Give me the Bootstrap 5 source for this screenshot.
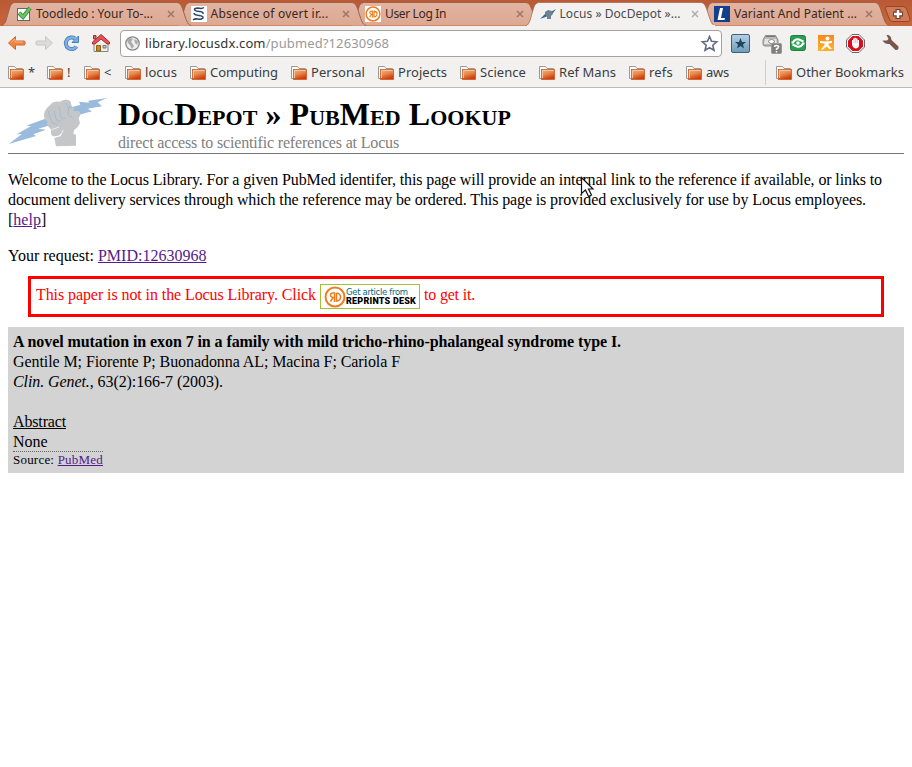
<!DOCTYPE html>
<html lang="en">
<head>
<meta charset="utf-8">
<title>Locus » DocDepot » PubMed Lookup</title>
<link href="https://cdn.jsdelivr.net/npm/bootstrap@5.3.0/dist/css/bootstrap.min.css" rel="stylesheet">
<style>
body{width:912px;height:767px;overflow:hidden;background:#fff;color:#000;font-family:"Liberation Serif",serif;font-size:16px;line-height:20px}
svg{display:block;flex:none;overflow:visible}
.chrome{font-family:"Noto Sans","Open Sans",sans-serif;color:#3c3c3c;height:88px;background:#f2f1f0;border-bottom:1px solid #bdbab7}
.strip{height:26px;background:linear-gradient(#b95a35,#c9653c);padding-left:2px;overflow:hidden}
.tab{width:190px;height:26px;margin-right:-15.5px;padding:1px 11px 0 14px;color:#3b2620;font-size:12px;line-height:25px}
.tab .shape{position:absolute;left:0;top:0;z-index:-1}
.tab.on{color:#4a4a4a}
.t1{z-index:5}.t2{z-index:4}.t3{z-index:3}.t4{z-index:9}.t5{z-index:2}
.tab .title{margin-left:4px}
.tab .x{position:absolute;left:165px;top:10px}
.fit{display:inline-block;white-space:nowrap;overflow:visible}
.tools{height:34px;padding:4px 0 4px 7px}
.url{width:602px;height:27px;border:1px solid #a5a29e;border-radius:4px;background:#fff;font-size:13px;margin-left:9px;padding:0 3px 0 4px}
.url .fit{color:#333;margin-left:5px}.url .path{color:#999}
.marks{height:25px;font-size:13px;line-height:24px;padding-left:8px;column-gap:13px}
.marks .fit{margin-bottom:2px}
.other{padding-left:10px;height:25px;border-left:1px solid #d0cdca}
.folder{width:16px;margin-right:4px}
.page{padding:8px 8px 0}
.head{height:58px;border-bottom:1px solid #777}
.head h1{font-size:32px;line-height:37px;font-weight:bold;font-variant:small-caps;margin:0}
.sub{color:#808080}
.intro{margin:16px 0 16px}
.intro .fit,.record .fit{vertical-align:top}
.page a{color:#551a8b}
.notice{margin:10px 20px;height:41px;border:3px solid red;color:red;padding:0 5px}
.rd{width:100px;height:25px;border:1px solid #a5bf32;background:#fff;margin:0 4px;padding-left:3px}
.rd .l1{font:8.5px/9px "DejaVu Sans",sans-serif;color:#006a83}
.rd .l2{font:900 9px/9px Roboto,sans-serif;color:#000}
.record{height:146px;background:#d3d3d3;padding:5px}
.source{font-size:13px;line-height:16px;border-top:1px dotted #666;margin-top:-1px;width:90px}
.pointer{position:absolute;left:580px;top:176px}
</style>
<script src="https://cdn.jsdelivr.net/npm/bootstrap@5.3.0/dist/js/bootstrap.bundle.min.js"></script>
</head>
<body>
<svg width="0" height="0" class="position-absolute">
<defs>
<linearGradient id="gf" x1="0" y1="0" x2="0.4" y2="1"><stop offset="0" stop-color="#f0b584"/><stop offset=".5" stop-color="#e78b4c"/><stop offset="1" stop-color="#cf3d10"/></linearGradient>
<linearGradient id="gt" x1="0" y1="0" x2="0" y2="1"><stop offset="0" stop-color="#e3b4a1"/><stop offset="1" stop-color="#dba892"/></linearGradient>
<linearGradient id="gb" x1="0" y1="0" x2="0" y2="1"><stop offset="0" stop-color="#b5d1e3"/><stop offset="1" stop-color="#6e9cba"/></linearGradient>
<linearGradient id="go" x1="0" y1="0" x2="0" y2="1"><stop offset="0" stop-color="#f58a1f"/><stop offset="1" stop-color="#fbb42c"/></linearGradient>
<symbol id="folder" viewBox="0 0 16 16"><path d="M.5 13.500V1.500H6.500L8 3.500H14.500V6" fill="#fff" stroke="#999"/><path d="M.5 13.500H3" stroke="#999"/><rect x="2.500" y="4.500" width="13" height="10" fill="url(#gf)" stroke="#cc5a22" stroke-width=".8"/><path d="M3.500 13V5.500H14.500" fill="none" stroke="#f4c59c"/></symbol>
<symbol id="tab" viewBox="0 0 190 26"><path d="M0 25.500C4 24 4.500 18 7 10C8.500 5 9.500 2.500 14 2.500H174C178.500 2.500 179.500 6 181 10C184 19 185 24.500 189 25.500" fill="url(#gt)" stroke="#9a614b"/></symbol>
<symbol id="x" viewBox="0 0 8 8"><path d="M1 1L7 7M7 1L1 7" stroke="currentColor" stroke-width="1.500" opacity=".4"/></symbol>
<symbol id="rd" viewBox="0 0 22 22"><circle cx="11" cy="11" r="9.500" fill="#fff" stroke="#ee7d20" stroke-width="2"/><path d="M10.500 16V7H9Q6.500 7 6.500 9T9 11.500H10.500M9 11.500L6.500 15.500M12.500 7V15H13Q16.500 14.500 16.500 11T12.500 7" fill="none" stroke="#ee7d20" stroke-width="1.500"/></symbol>
</defs>
</svg>
<header class="chrome">
<div class="strip d-flex">
<div class="tab t1 position-relative d-flex align-items-center flex-shrink-0"><svg class="shape" width="190" height="26"><use href="#tab"/></svg>
<svg width="16" height="16"><rect x="1.500" y="2.500" width="12" height="12" fill="#fff" stroke="#666"/><path d="M3 7L7 11L14 2" fill="none" stroke="#338038" stroke-width="4"/><path d="M3 7L7 11L14 2" fill="none" stroke="#66c75e" stroke-width="2.500"/></svg>
<span class="title fit" data-w="117">Toodledo : Your To-...</span><svg class="x" width="8" height="8"><use href="#x"/></svg></div>
<div class="tab t2 position-relative d-flex align-items-center flex-shrink-0"><svg class="shape" width="190" height="26"><use href="#tab"/></svg>
<svg width="16" height="16"><path fill="#fff" d="M0 0H16V16H0Z"/><path d="M13 1.500Q11 3 7 2Q3 2 3.500 4Q5 5.500 9 5.500Q12.500 6 12 8M3 7Q3 9 8 9.500Q12.500 10 12 12Q10 14 6.500 13Q4 12.500 2 14" fill="none" stroke="#29466d" stroke-width="1.500"/></svg>
<span class="title fit" data-w="118">Absence of overt ir...</span><svg class="x" width="8" height="8"><use href="#x"/></svg></div>
<div class="tab t3 position-relative d-flex align-items-center flex-shrink-0"><svg class="shape" width="190" height="26"><use href="#tab"/></svg>
<svg width="16" height="16"><path fill="#fff" d="M0 0H16V16H0Z"/><use href="#rd"/></svg>
<span class="title fit" data-w="61">User Log In</span><svg class="x" width="8" height="8"><use href="#x"/></svg></div>
<div class="tab t4 on position-relative d-flex align-items-center flex-shrink-0"><svg class="shape" width="190" height="26"><path d="M0 26C4 24 4.500 18 7 10C8.500 5 9.500 2.500 14 2.500H174C178.500 2.500 179.500 6 181 10C184 19 185 24.500 189 26Z" fill="#f2f1f0" stroke="#a66a50" stroke-width=".8"/><path d="M1 26H189" stroke="#f2f1f0" stroke-width="2"/></svg>
<svg width="16" height="16"><path d="M0 13L5 8L9 7L16 3L13 7L8 10Z" fill="#1c68a9"/><path d="M5 6L8 4L12 5L13 8L11 10V13H7V10L5 9Z" fill="#75818a"/></svg>
<span class="title fit" data-w="121">Locus » DocDepot »...</span><svg class="x" width="8" height="8"><use href="#x"/></svg></div>
<div class="tab t5 position-relative d-flex align-items-center flex-shrink-0"><svg class="shape" width="190" height="26"><use href="#tab"/></svg>
<svg width="16" height="16"><path fill="#153f8c" d="M0 0H16V16H0Z"/><path d="M6 2H9L7 12H11L10.500 14H3.500Z" fill="#fff"/></svg>
<span class="title fit" data-w="123">Variant And Patient ...</span><svg class="x" width="8" height="8"><use href="#x"/></svg></div>
<svg class="ms-2" width="30" height="26"><path d="M4 6.500H20Q23 6.500 24 10L27 19Q27.500 21.500 25 21.500H10Q7 21.500 6 18L2.500 9Q2 6.500 4 6.500Z" fill="#d07b58" stroke="#994622"/><path d="M15 9V19M10 14H20" stroke="#773c30" stroke-width="5"/><path d="M15 10V18M11 14H19" stroke="#fff" stroke-width="2.500"/></svg>
</div>
<div class="tools d-flex align-items-center">
<svg width="20" height="18"><path d="M1.500 9L8.500 2.500V7H17.500Q19 9 17.500 11H8.500V15.500Z" fill="#ee8440" stroke="#d66828"/><path d="M4 8.500L8 5V8H16" fill="none" stroke="#f6b184"/></svg>
<svg class="ms-2" width="19" height="18"><path d="M17.500 9L10.500 2.500V7H1.500Q0 9 1.500 11H10.500V15.500Z" fill="#dddbd8" stroke="#c9c7c4"/></svg>
<svg style="margin-left:9px" width="17" height="18"><path d="M13.500 12.500A5.800 5.800 0 1 1 12 4.500" fill="none" stroke="#4581bf" stroke-width="4"/><path d="M9 8.500H15.500V2Z" fill="#79acdf" stroke="#4581bf"/><path d="M13.500 12.500A5.800 5.800 0 1 1 12 4.500" fill="none" stroke="#82b1e0" stroke-width="2.300"/></svg>
<svg style="margin-left:11px" width="20" height="20"><path d="M3 9L10 3L17 9V18.500H3Z" fill="#eeeeea" stroke="#85857e"/><path d="M5.500 12.500H9.500V18H5.500Z" fill="#cc8720" stroke="#8c600f"/><path d="M12 12.500H15V15H12Z" fill="#aecbe5" stroke="#777"/><path d="M2.500 2.500H5V6H2.500Z" fill="#d66" stroke="#943030"/><path d="M1.500 11V9L10 1.500L18.500 9V11H16L10 6L4 11Z" fill="#dd5358" stroke="#b22c34"/></svg>
<div class="url d-flex align-items-center flex-shrink-0"><svg width="15" height="15"><circle cx="7.500" cy="7.500" r="6.700" fill="#eee" stroke="#888" stroke-width="1.300"/><path d="M2 4L5 2L8 3L6 6L7 7L9 10L7 13L5 9L3 7ZM9 3L13 5L12 9L10 7Z" fill="#aaa"/></svg><span class="fit" data-w="244">library.locusdx.com<span class="path">/pubmed?12630968</span></span>
<svg class="ms-auto" width="17" height="17"><path d="M8.500 1.500L10.500 6.300L15.700 6.800L11.800 10.200L13 15.300L8.500 12.600L4 15.300L5.200 10.200L1.300 6.800L6.500 6.300Z" fill="#fff" stroke="#636b82" stroke-width="1.600"/></svg></div>
<svg style="margin-left:9px" width="19" height="19"><rect x=".5" y=".5" width="18" height="18" rx="1.500" fill="url(#gb)" stroke="#416179"/><path d="M9.500 4L11 8H15L12 10.500L13 14.500L9.500 12L6 14.500L7 10.500L4 8H8Z" fill="#1f455f"/></svg>
<svg style="margin-left:12px" width="20" height="22"><path d="M3.500 3.500H13.500L16 8V12Q16 14 14 14H3Q1 14 1 12V8Z" fill="#b9b9b7" stroke="#8a8a8a"/><path d="M3.500 4.500H13.500" stroke="#777"/><path d="M3 7H14L15 12H2Z" fill="#e4e4e2"/><ellipse cx="9.500" cy="9.500" rx="3" ry="2" fill="#fff" stroke="#888"/><rect x="9.500" y="11.500" width="10" height="10" rx="1" fill="#808080" stroke="#999"/><path d="M12.500 15Q12.500 13.500 14.500 13.500T16.500 15Q16.500 16 14.500 17V18M14.500 19V20.500" fill="none" stroke="#fff" stroke-width="1.500"/></svg>
<svg style="margin-left:8px" width="16" height="16"><rect x=".5" y=".5" width="15" height="15" rx="2" fill="#27a052" stroke="#237d42"/><path d="M1.500 7.500H3Q5 3.500 9 4.500L13.500 6.500M2.500 9.500L7 11.500Q11 12.500 13 8.500H14.500" fill="none" stroke="#fff" stroke-width="2"/><circle cx="8" cy="8" r="1.800" fill="#fff"/></svg>
<svg style="margin-left:12px" width="16" height="16"><rect width="16" height="16" fill="url(#go)"/><circle cx="9.500" cy="3.500" r="2" fill="#fff"/><path d="M2 6L6 6.500L14 6V8L10.500 8.500V10L14 14H11.500L8.500 11.500L5 14.500H3L6.500 10V8.500L2 8Z" fill="#fff"/></svg>
<svg style="margin-left:12px" width="19" height="19"><path d="M6 .5H13L18.500 6V13L13 18.500H6L.5 13V6Z" fill="#fff" stroke="#666"/><path d="M6.500 2H12.500L17 6.500V12.500L12.500 17H6.500L2 12.500V6.500Z" fill="#d90d1e"/><path d="M6 6H7V4.500H8.500V3.800H10V4.500H11.500V6H13V11Q13 14 10 14.500Q7.500 14.500 6 11Z" fill="#fff"/><path d="M8 6V9M9.700 5V9M11.300 6V9" stroke="#e77" stroke-width=".5"/></svg>
<svg style="margin-left:17px" width="18" height="18"><path d="M4.500 1Q9 .5 9.500 6L16.500 12.500Q17 16.500 13.500 16L7.500 10Q3 10.500 .5 6.500L5 6.500L6.500 5Z" fill="#76574d"/></svg>
</div>
<nav class="marks d-flex align-items-center" id="marks">
<div class="d-flex align-items-center"><svg class="folder" height="16"><use href="#folder"/></svg><span class="fit" data-w="6">*</span></div>
<div class="d-flex align-items-center"><svg class="folder" height="16"><use href="#folder"/></svg><span class="fit" data-w="4">!</span></div>
<div class="d-flex align-items-center"><svg class="folder" height="16"><use href="#folder"/></svg><span class="fit" data-w="8">&lt;</span></div>
<div class="d-flex align-items-center"><svg class="folder" height="16"><use href="#folder"/></svg><span class="fit" data-w="32">locus</span></div>
<div class="d-flex align-items-center"><svg class="folder" height="16"><use href="#folder"/></svg><span class="fit" data-w="68">Computing</span></div>
<div class="d-flex align-items-center"><svg class="folder" height="16"><use href="#folder"/></svg><span class="fit" data-w="54">Personal</span></div>
<div class="d-flex align-items-center"><svg class="folder" height="16"><use href="#folder"/></svg><span class="fit" data-w="49">Projects</span></div>
<div class="d-flex align-items-center"><svg class="folder" height="16"><use href="#folder"/></svg><span class="fit" data-w="46">Science</span></div>
<div class="d-flex align-items-center"><svg class="folder" height="16"><use href="#folder"/></svg><span class="fit" data-w="57">Ref Mans</span></div>
<div class="d-flex align-items-center"><svg class="folder" height="16"><use href="#folder"/></svg><span class="fit" data-w="24">refs</span></div>
<div class="d-flex align-items-center"><svg class="folder" height="16"><use href="#folder"/></svg><span class="fit" data-w="23">aws</span></div>
<div class="other d-flex align-items-center ms-auto me-2"><svg class="folder" height="16"><use href="#folder"/></svg><span class="fit" data-w="108">Other Bookmarks</span></div>
</nav>
</header>
<main class="page">
<div class="head d-flex">
<svg class="me-2" width="102" height="52" viewBox="24 36 306 156"><path d="M26 180L66 150L50 151L93 126L78 125L140 103L170 112L150 124L115 134L138 137L100 151L108 156ZM215 70L241 62L237 53L267 56L265 50L321 42L293 55L306 67L263 74L276 82L225 96Z" fill="#9abbdb"/><path d="M132 94Q133 76 151 62Q160 50 180 53Q195 43 211 51L216 68L223 71L220 80L238 82Q244 91 236 103L240 118Q234 132 222 139L220 149L228 152V185L168 187L163 162L181 157L188 143Q177 160 157 156Q150 146 154 137L144 127Q139 119 143 112L134 107Z" fill="#c5c6c8"/><path d="M144 80Q148 100 157 116Q166 121 172 121M163 80Q165 103 172 111Q180 115 185 106M176 67Q182 81 181 96Q187 108 197 101M198 57L203 70L209 67Q203 76 205 93L218 102M203 78Q215 66 220 70" fill="none" stroke="#8eb6dc" stroke-width="2"/><path d="M155 137L177 129M181 154L190 138" stroke="#fff" stroke-width="2"/></svg>
<div><h1><span class="fit" data-w="393">DocDepot » PubMed Lookup</span></h1><div class="sub"><span class="fit" data-w="281">direct access to scientific references at Locus</span></div></div>
</div>
<p class="intro text-nowrap"><span class="fit" data-w="874">Welcome to the Locus Library. For a given PubMed identifer, this page will provide an internal link to the reference if available, or links to</span><br><span class="fit" data-w="858">document delivery services through which the reference may be ordered. This page is provided exclusively for use by Locus employees.</span><br>[<a href="#">help</a>]</p>
<div>Your request: <a href="#">PMID:12630968</a></div>
<div class="notice d-flex align-items-center"><span class="mb-1 fit" data-w="280">This paper is not in the Locus Library. Click</span>
<span class="rd d-flex align-items-center"><svg width="22" height="22"><use href="#rd"/></svg><span class="d-flex flex-column"><span class="l1 fit" data-w="62">Get article from</span><span class="l2 fit" data-w="70">REPRINTS DESK</span></span></span>
<span class="mb-1 fit" data-w="51">to get it.</span></div>
<section class="record"><div class="fw-bold"><span class="fit" data-w="608">A novel mutation in exon 7 in a family with mild tricho-rhino-phalangeal syndrome type I.</span></div>
<div><span class="fit" data-w="387">Gentile M; Fiorente P; Buonadonna AL; Macina F; Cariola F</span></div>
<div><span class="fit" data-w="210"><em>Clin. Genet.</em>, 63(2):166-7 (2003).</span></div><br>
<div><span class="fit text-decoration-underline" data-w="53">Abstract</span></div><div>None</div>
<div class="source"><span class="fit" data-w="90">Source: <a href="#">PubMed</a></span></div></section>
</main>
<svg class="pointer" width="14" height="22"><path d="M1.500 1.500V17.500L5.500 14L8.500 20.500L11.500 19L8.500 13H13Z" fill="#fff" stroke="#111" stroke-width="1.200"/></svg>
<script>
// Track each label so that it fills its nominal width.
document.querySelectorAll('.fit').forEach(function(e){
  var w=+e.dataset.w, n=e.textContent.length, d=w-e.getBoundingClientRect().width;
  if(n>1) e.style.letterSpacing=(d/n)+'px';
  e.style.width=w+'px';
});
</script>
</body>
</html>
